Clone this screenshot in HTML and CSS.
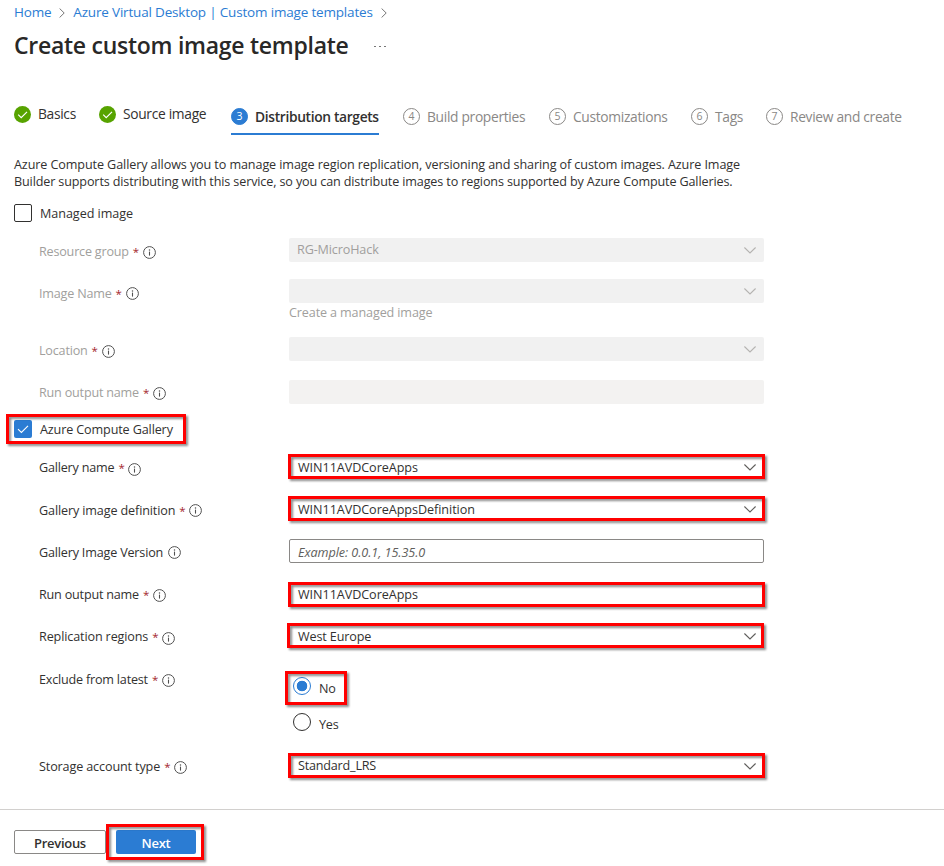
FILE: index.html
```html
<!DOCTYPE html>
<html lang="en">
<head>
<meta charset="utf-8">
<title>Create custom image template</title>
<link rel="stylesheet" href="styles.css">
</head>
<body>
<svg class="defs" width="0" height="0" aria-hidden="true">
  <symbol id="info" viewBox="0 0 13 13"><circle cx="6.5" cy="6.5" r="5.9" fill="none" stroke="#505050" stroke-width="1"/><path d="M6.5 5.6V9.6" stroke="#505050" stroke-width="1.1"/><circle cx="6.5" cy="3.9" r=".75" fill="#505050"/></symbol>
  <symbol id="down" viewBox="0 0 12 7"><path d="M.4.5 6 6 11.6.5" fill="none" stroke="currentColor" stroke-width="1.1"/></symbol>
  <symbol id="right" viewBox="0 0 6 10"><path d="M.6.5 5.2 5 .6 9.5" fill="none" stroke="#777" stroke-width="1"/></symbol>
  <symbol id="done" viewBox="0 0 17 17"><circle cx="8.5" cy="8.5" r="8.5" fill="#57a300"/><path d="M4.2 8.6 7.2 11.6 13 5.8" fill="none" stroke="#fff" stroke-width="1.2"/></symbol>
</svg>

<nav class="breadcrumb">
  <a class="t-home">Home</a><svg><use href="#right"/></svg>
  <a class="t-avd">Azure Virtual Desktop | Custom image templates</a><svg><use href="#right"/></svg>
</nav>
<header class="title"><h1>Create custom image template</h1><span class="dots"><i></i><i></i><i></i></span></header>

<ol class="steps">
  <li class="finished basics"><svg><use href="#done"/></svg><span>Basics</span></li>
  <li class="finished source"><svg><use href="#done"/></svg><span>Source image</span></li>
  <li class="current"><b>3</b><span>Distribution targets</span></li>
  <li class="build"><b>4</b><span>Build properties</span></li>
  <li class="custom"><b>5</b><span>Customizations</span></li>
  <li class="tags"><b>6</b><span>Tags</span></li>
  <li class="review"><b>7</b><span>Review and create</span></li>
</ol>

<p class="intro"><span class="line1">Azure Compute Gallery allows you to manage image region replication, versioning and sharing of custom images. Azure Image</span><br><span class="line2">Builder supports distributing with this service, so you can distribute images to regions supported by Azure Compute Galleries.</span></p>

<main>
  <div class="check"><span class="box"></span><span class="text wider">Managed image</span></div>

  <div class="row h41 off"><label><span>Resource group</span><em>*</em><svg><use href="#info"/></svg></label>
    <div class="field"><span class="wide">RG-MicroHack</span><svg><use href="#down"/></svg></div></div>
  <div class="row h58 off"><label class="down"><span>Image Name</span><em>*</em><svg><use href="#info"/></svg></label>
    <div><div class="field"><span></span><svg><use href="#down"/></svg></div><div class="hint wide">Create a managed image</div></div></div>
  <div class="row h43 off"><label><span>Location</span><em>*</em><svg><use href="#info"/></svg></label>
    <div class="field"><span></span><svg><use href="#down"/></svg></div></div>
  <div class="row h40 off"><label class="up"><span>Run output name</span><em>*</em><svg><use href="#info"/></svg></label>
    <div class="field plain"></div></div>

  <div class="check gallery"><span class="box on"><svg viewBox="0 0 18 18"><path d="M4 9.2 7.4 12.5 14 5.8" fill="none" stroke="#fff" stroke-width="1.1"/></svg></span><span class="text wide">Azure Compute Gallery</span><div class="mark mark-gallery"></div></div>

  <div class="row h42"><label class="low up"><span>Gallery name</span><em>*</em><svg><use href="#info"/></svg></label>
    <div class="field"><span class="wider">WIN11AVDCoreApps</span><svg><use href="#down"/></svg><div class="mark"></div></div></div>
  <div class="row h42"><label class="high"><span class="wide">Gallery image definition</span><em>*</em><svg><use href="#info"/></svg></label>
    <div class="field"><span class="wider">WIN11AVDCoreAppsDefinition</span><svg><use href="#down"/></svg><div class="mark"></div></div></div>
  <div class="row h43"><label class="high"><span class="version">Gallery Image Version</span><svg><use href="#info"/></svg></label>
    <div class="field input"><span class="wider">Example: 0.0.1, 15.35.0</span></div></div>
  <div class="row h42"><label class="up"><span>Run output name</span><em>*</em><svg><use href="#info"/></svg></label>
    <div class="field"><span class="wider">WIN11AVDCoreApps</span><div class="mark mark-run"></div></div></div>
  <div class="row h53"><label class="low up"><span class="wide">Replication regions</span><em>*</em><svg><use href="#info"/></svg></label>
    <div class="field"><span class="wide">West Europe</span><svg><use href="#down"/></svg><div class="mark mark-region"></div></div></div>
  <div class="row h77"><label class="radio-label"><span>Exclude from latest</span><em>*</em><svg><use href="#info"/></svg></label>
    <div class="radios"><div class="radio selected"><i></i><span>No</span><div class="mark mark-no"></div></div><div class="radio"><i></i><span>Yes</span></div></div></div>
  <div class="row"><label class="up"><span class="wide">Storage account type</span><em>*</em><svg><use href="#info"/></svg></label>
    <div class="field storage"><span>Standard_LRS</span><svg><use href="#down"/></svg><div class="mark"></div></div></div>
</main>

<footer>
  <button class="prev"><span>Previous</span></button>
  <div class="next-wrap"><button class="next"><span>Next</span></button><div class="mark mark-next"></div></div>
</footer>
</body>
</html>
```

FILE: styles.css
```css
* { box-sizing: border-box; }
body { margin: 0; width: 944px; height: 866px; overflow: hidden; background: #fff; color: #323130; font: 12.6px/18px "Open Sans", "Noto Sans", sans-serif; letter-spacing: -0.2px; }
svg { display: block; flex: none; }
.defs { position: absolute; }
span { white-space: nowrap; }
.wide { letter-spacing: -0.13px; }
.wider { letter-spacing: -0.05px; }

.breadcrumb { display: flex; align-items: center; height: 25px; padding-left: 14px; font-size: 13.5px; color: #2b7cd3; }
.breadcrumb a { margin-top: -1px; }
.breadcrumb svg { width: 6px; height: 10px; margin: 1px 8px 0; }
.t-avd { letter-spacing: -0.18px; }
.title { display: flex; height: 41px; padding-left: 14px; }
h1 { margin: 0; font-size: 23px; line-height: 41px; font-weight: 600; letter-spacing: -0.27px; color: #292827; white-space: nowrap; width: 360px; }
.dots { display: flex; gap: 3px; padding-top: 21px; }
.dots i { width: 2px; height: 1px; background: #777; }

.steps { display: flex; list-style: none; margin: 32px 0 0; padding: 0 0 0 14px; height: 37px; font-size: 13.8px; letter-spacing: -0.32px; color: #8a8886; }
.steps li { display: flex; align-items: center; height: 37px; gap: 7px; }
.steps .finished { height: 33px; color: #323130; }
.steps .finished span { margin-top: -1px; }
.steps .finished svg { width: 17px; height: 17px; }
.steps b { flex: none; width: 17px; height: 17px; border: 1px solid #8a8886; border-radius: 50%; font-size: 10.5px; line-height: 15px; font-weight: 400; text-align: center; letter-spacing: 0; }
.steps .current { color: #323130; font-weight: 600; border-bottom: 2px solid #2b7cd3; padding-top: 2px; letter-spacing: -0.34px; }
.steps .current b { background: #2b7cd3; border-color: #2b7cd3; color: #fff; }
.basics { width: 85px; }
.source { width: 132px; }
.current { width: 148px; margin-right: 24px; }
.build { width: 146px; }
.custom { width: 142px; }
.tags { width: 75px; }

.intro { margin: 21px 0 0; padding-left: 14px; height: 34px; line-height: 17px; }
.line1 { letter-spacing: -0.1px; }
.line2 { letter-spacing: -0.135px; }

main { height: 605px; }
.check { position: relative; display: flex; align-items: center; gap: 8px; height: 18px; margin: 14px 0 16px 14px; }
.check .text { padding-top: 2px; }
.box { width: 18px; height: 18px; border: 1px solid #323130; border-radius: 2px; }
.box.on { border: 0; background: #2b7cd3; }
.box svg { width: 18px; height: 18px; }
.check.gallery { margin: 0 0 17px 14px; }

.row { display: flex; padding-left: 39px; }
.row label { display: flex; align-items: center; width: 250px; height: 27px; }
.row em { font-style: normal; font-size: 11.5px; color: #a4262c; margin: 0 5px 0 4px; width: 5px; letter-spacing: 0; line-height: 14px; }
.row label svg { width: 13px; height: 13px; position: relative; top: 1px; }
.version { margin-right: 5px; letter-spacing: -0.18px; }
.row .low svg { top: 2px; }
.row .high svg { top: 0; }
.row .up { margin-top: -1px; }
.row .down { margin-top: 1px; }
.row .down svg { top: 0; }
.h40 { height: 40px; } .h41 { height: 41px; } .h42 { height: 42px; } .h43 { height: 43px; }
.h53 { height: 53px; } .h58 { height: 58px; } .h77 { height: 77px; }
.off { color: #a19f9d; }
.field { position: relative; display: flex; align-items: center; justify-content: space-between; width: 475px; height: 24px; padding: 0 8px 0 9px; border-radius: 2px; }
.field > span { padding-top: 2px; }
.off .field > span, .storage > span { padding-top: 0; }
.field > svg { width: 12px; height: 7px; margin-top: 1px; color: #605e5c; }
.off .field { background: #f1f1f1; padding-left: 8px; }
.off .field > svg { margin-top: 1px; color: #b5b3b1; }
.off .plain { background: #f3f2f1; }
.input { border: 1px solid #8a8886; padding-left: 8px; font-style: italic; color: #605e5c; }
.input > span { padding-top: 3px; }
.hint { line-height: 20px; }

.mark { position: absolute; left: -1px; top: -1px; width: 477px; height: 25px; border: 3px solid #f00; filter: drop-shadow(2.5px 2.5px 1.2px rgba(0, 0, 0, .45)); }
.mark-gallery { left: -8px; top: -6px; width: 180px; height: 30px; }
.mark-run { top: 0; }
.mark-region { left: -2px; }
.mark-no { left: -8px; top: -6px; width: 62px; height: 34px; }
.mark-next { left: -10px; top: -6px; width: 98px; height: 36px; }

.radio { position: relative; display: flex; gap: 8px; width: 60px; height: 18px; margin-bottom: 18px; }
.radio i { width: 18px; height: 18px; border: 1px solid #323130; border-radius: 50%; }
.radio.selected i { border-color: #2b7cd3; background: radial-gradient(circle, #2b7cd3 5px, #fff 5.6px); }
.radio span { padding-top: 3px; }
.radios { padding-left: 4px; }
.row .radio-label { margin-top: -11px; }

footer { display: flex; height: 57px; border-top: 1px solid #d2d0ce; padding: 20px 0 0 14px; }
button { height: 24px; font: 600 13px/22px "Open Sans", sans-serif; letter-spacing: -0.3px; border-radius: 2px; padding: 1px 0 0; }
.prev { width: 92px; border: 1px solid #8a8886; background: #fff; color: #323130; }
.next-wrap { position: relative; margin-left: 10px; }
.next { display: block; width: 80px; border: 0; background: #2b7cd3; color: #fff; }
```
